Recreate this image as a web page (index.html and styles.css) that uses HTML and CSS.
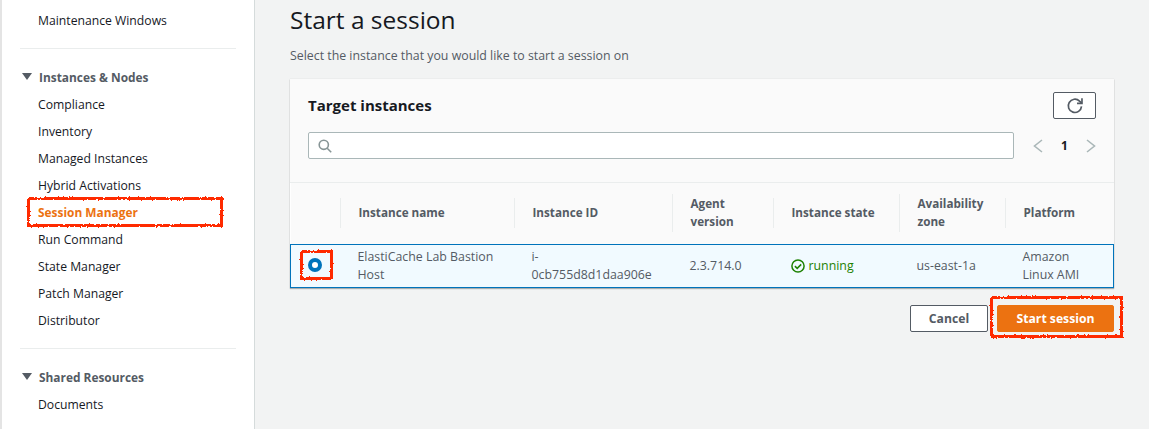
FILE: index.html
```html
<!DOCTYPE html>
<html lang="en">
<head>
  <meta charset="UTF-8" />
  <title>Start a session</title>
  <link rel="stylesheet" href="styles.css">
</head>
<body>
  <!-- wobble used by the red marks -->
  <svg class="defs" width="0" height="0">
    <filter id="rough" x="-5%" y="-15%" width="110%" height="130%">
      <feTurbulence type="fractalNoise" baseFrequency="0.55" numOctaves="2" seed="4"/>
      <feDisplacementMap in="SourceGraphic" scale="3"/>
    </filter>
  </svg>

  <div class="layout">
    <nav class="sidebar">
      <a class="nav-link first">Maintenance Windows</a>
      <hr class="nav-divider">
      <div class="nav-heading"><span class="caret"></span>Instances &amp; Nodes</div>
      <a class="nav-link">Compliance</a>
      <a class="nav-link">Inventory</a>
      <a class="nav-link">Managed Instances</a>
      <a class="nav-link">Hybrid Activations</a>
      <a class="nav-link active">Session Manager<span class="scribble scribble-nav"></span></a>
      <a class="nav-link">Run Command</a>
      <a class="nav-link">State Manager</a>
      <a class="nav-link">Patch Manager</a>
      <a class="nav-link">Distributor</a>
      <hr class="nav-divider">
      <div class="nav-heading"><span class="caret"></span>Shared Resources</div>
      <a class="nav-link">Documents</a>
    </nav>

    <main class="content">
      <h1>Start a session</h1>
      <p class="lead">Select the instance that you would like to start a session on</p>

      <section class="card">
        <div class="card-head">
          <div class="card-title-row">
            <h2>Target instances</h2>
            <button class="refresh" type="button" aria-label="Refresh">
              <svg width="18" height="18" viewBox="0 0 16 16" fill="none" stroke="#545b64" stroke-width="1.5">
                <path d="M13.8 8.4A5.9 5.9 0 1 1 12 3.6L14 5.4"/>
                <path d="M14.2 1.2v4.4H9.8"/>
              </svg>
            </button>
          </div>
          <div class="search-row">
            <div class="search">
              <svg width="14" height="14" viewBox="0 0 14 14" fill="none" stroke="#879596" stroke-width="1.6">
                <circle cx="5.8" cy="5.8" r="4.6"/>
                <path d="M9.2 9.2l4 4"/>
              </svg>
            </div>
            <div class="pager">
              <svg width="10" height="14" viewBox="0 0 10 14" fill="none" stroke="#aab7b8" stroke-width="1.6"><path d="M9 1L1.5 7 9 13"/></svg>
              <span class="page-num">1</span>
              <svg width="10" height="14" viewBox="0 0 10 14" fill="none" stroke="#aab7b8" stroke-width="1.6"><path d="M1 1l7.5 6L1 13"/></svg>
            </div>
          </div>
        </div>

        <table class="instances">
          <colgroup>
            <col class="c-radio"><col class="c-name"><col class="c-id"><col class="c-agent"><col class="c-state"><col class="c-zone"><col class="c-platform">
          </colgroup>
          <thead>
            <tr>
              <th></th>
              <th><div class="th-in">Instance name</div></th>
              <th><div class="th-in">Instance ID</div></th>
              <th><div class="th-in">Agent version</div></th>
              <th><div class="th-in">Instance state</div></th>
              <th><div class="th-in">Availability zone</div></th>
              <th><div class="th-in">Platform</div></th>
            </tr>
          </thead>
          <tbody>
            <tr class="selected">
              <td class="radio-cell"><span class="radio"></span><span class="scribble scribble-radio"></span></td>
              <td>ElastiCache Lab Bastion Host</td>
              <td>i-<br>0cb755d8d1daa906e</td>
              <td>2.3.714.0</td>
              <td>
                <span class="state">
                  <svg width="14" height="14" viewBox="0 0 14 14" fill="none" stroke="#1d8102" stroke-width="1.5">
                    <circle cx="7" cy="7" r="6.1"/>
                    <path d="M3.9 7.1l2.3 2.3 4-4"/>
                  </svg>
                  running
                </span>
              </td>
              <td>us-east-1a</td>
              <td>Amazon Linux AMI</td>
            </tr>
          </tbody>
        </table>
      </section>

      <div class="actions">
        <button class="btn btn-cancel" type="button">Cancel</button>
        <button class="btn btn-primary" type="button">Start session<span class="scribble scribble-btn"></span></button>
      </div>
    </main>
  </div>
</body>
</html>
```

FILE: styles.css
```css
* {
  box-sizing: border-box;
}
html, body {
  margin: 0;
  height: 429px;
  overflow: hidden;
}
body {
  font-family: "Open Sans", "Noto Sans", sans-serif;
  font-size: 12.2px;
  color: #16191f;
  background: #f2f3f3;
}
.defs {
  position: absolute;
}
.layout {
  display: flex;
  height: 429px;
}

/* sidebar */
.sidebar {
  width: 255px;
  flex: none;
  background: #fff;
  border-right: 1px solid #d5dbdb;
  border-left: 2px solid #e4e4e4;
  padding: 7px 18px 0 18px;
}
.nav-link {
  display: block;
  position: relative;
  height: 27px;
  line-height: 27px;
  padding-left: 18px;
  white-space: nowrap;
}
.nav-link.active {
  color: #ec7211;
  font-weight: 700;
  font-size: 11.9px;
}
.nav-divider {
  border: 0;
  border-top: 1px solid #eaeded;
  margin: 14px 0 15px;
}
.nav-heading {
  display: flex;
  align-items: center;
  height: 27px;
  padding-bottom: 2px;
  font-size: 11.9px;
  font-weight: 700;
  color: #545b64;
  white-space: nowrap;
}
.caret {
  width: 0;
  height: 0;
  margin: 0 7px 0 2px;
  border-left: 5px solid transparent;
  border-right: 5px solid transparent;
  border-top: 7px solid #545b64;
}

/* red hand drawn marks */
.scribble {
  position: absolute;
  border: 3px solid #ff2a00;
  filter: url(#rough);
  pointer-events: none;
}
.scribble-nav {
  left: 7px;
  top: -2px;
  width: 196px;
  height: 30px;
}
.scribble-radio {
  left: 9px;
  top: 5px;
  width: 33px;
  height: 30px;
}
.scribble-btn {
  left: -8px;
  top: -10px;
  width: 133px;
  height: 42px;
}

/* main column */
.content {
  flex: 1;
  padding: 0 36px 0 35px;
}
h1 {
  margin: 5px 0 0;
  font-size: 24.5px;
  line-height: 30px;
  font-weight: 400;
}
.lead {
  margin: 11px 0 13px;
  font-size: 12.35px;
  line-height: 20px;
  color: #545b64;
}
.card {
  background: #fff;
  box-shadow: 0 1px 1px rgba(0, 28, 36, 0.3), 0 0 1px rgba(0, 28, 36, 0.15);
}
.card-head {
  background: #fafafa;
  border-bottom: 1px solid #eaeded;
  padding: 13px 18px 23px;
  height: 104px;
}
.card-title-row {
  display: flex;
  justify-content: space-between;
  align-items: center;
  height: 27px;
  margin-bottom: 13px;
}
h2 {
  margin: 0 0 2px;
  font-size: 15px;
  font-weight: 700;
}
.refresh {
  width: 43px;
  height: 27px;
  padding: 0;
  display: flex;
  align-items: center;
  justify-content: center;
  background: #fff;
  border: 1px solid #545b64;
  border-radius: 2px;
}
.search-row {
  display: flex;
  align-items: center;
  justify-content: space-between;
}
.search {
  width: 706px;
  height: 27px;
  display: flex;
  align-items: center;
  padding-left: 9px;
  background: #fff;
  border: 1px solid #aab7b8;
  border-radius: 2px;
}
.pager {
  display: flex;
  align-items: center;
  gap: 17px;
}
.page-num {
  font-size: 12px;
  font-weight: 700;
  width: 9px;
  text-align: center;
}

/* table */
.instances {
  width: 823px;
  table-layout: fixed;
  border-collapse: collapse;
}
.c-radio { width: 49px; }
.c-name { width: 174px; }
.c-id { width: 158px; }
.c-agent { width: 101px; }
.c-state { width: 126px; }
.c-zone { width: 106px; }
.c-platform { width: 109px; }
.instances th {
  height: 61px;
  padding: 0;
  text-align: left;
  font-size: 11.7px;
  font-weight: 700;
  color: #545b64;
  background: #fafafa;
}
.th-in {
  display: flex;
  align-items: center;
  min-height: 30px;
  line-height: 18px;
  padding: 0 14px 2px 18px;
  border-left: 1px solid #eaeded;
}
.instances td {
  height: 43px;
  padding: 0 12px 0 18px;
  font-size: 12.35px;
  line-height: 18px;
  color: #545b64;
  background: #f1faff;
  border-top: 1px solid #0073bb;
  border-bottom: 1px solid #0073bb;
}
.instances td:first-child {
  border-left: 1px solid #0073bb;
}
.instances td:last-child {
  border-right: 1px solid #0073bb;
}
.instances .radio-cell {
  position: relative;
  padding: 0;
}
.radio {
  position: absolute;
  left: 17px;
  top: 13px;
  width: 14px;
  height: 14px;
  border-radius: 50%;
  border: 4px solid #0073bb;
  background: #fff;
}
.state {
  display: flex;
  align-items: center;
  gap: 4px;
  color: #1d8102;
}

/* footer buttons */
.actions {
  display: flex;
  justify-content: flex-end;
  gap: 9px;
  margin-top: 17px;
}
.btn {
  height: 27px;
  padding: 0;
  font: 700 12.2px "Open Sans", "Noto Sans", sans-serif;
  border-radius: 2px;
}
.btn-cancel {
  width: 78px;
  background: #fff;
  color: #545b64;
  border: 1px solid #545b64;
}
.btn-primary {
  position: relative;
  width: 117px;
  background: #ec7211;
  color: #fff;
  border: 1px solid #ec7211;
}
```
